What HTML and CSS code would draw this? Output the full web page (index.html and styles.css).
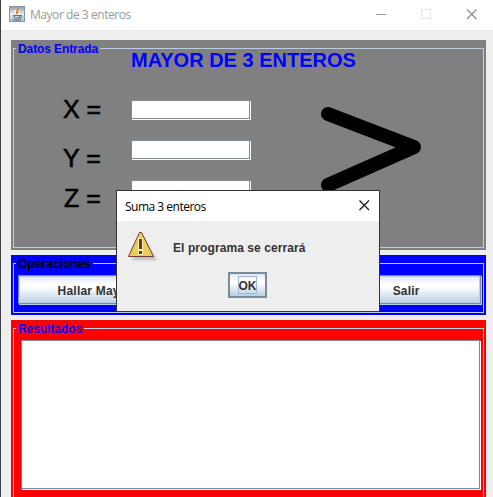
FILE: index.html
```html
<!DOCTYPE html>
<html lang="es">
<head>
<meta charset="utf-8">
<title>Mayor de 3 enteros</title>
<link rel="stylesheet" href="styles.css">
</head>
<body>
<div class="window">
  <header class="titlebar">
    <svg class="java" width="16" height="16" viewBox="0 0 16 16">
      <defs><linearGradient id="jg" x2="0" y2="1"><stop offset="0" stop-color="#8f9ba5"/><stop offset=".5" stop-color="#e8edf0"/><stop offset="1" stop-color="#a9b9c5"/></linearGradient></defs>
      <rect x=".5" y=".5" width="15" height="15" fill="url(#jg)" stroke="#8194a3"/>
      <path d="M5 4H11V9H5Z" fill="#f6f3ee"/>
      <path d="M9 2C10 4 6 5 7.500 8M10 4.500C8 5.500 8 6.500 9 8" fill="none" stroke="#ed7d28" stroke-width="1.300"/>
      <path d="M4.500 9.500H11L10 12H6ZM11 9.500Q13.500 9 13 10.500T10.500 12M4 13.500Q8 14.800 12 13.500" fill="none" stroke="#4c6f8f"/>
    </svg>
    <h1 class="caption"><span>Mayor de 3 enteros</span></h1>
    <svg class="controls" width="104" height="12" viewBox="0 0 104 12" fill="none">
      <path d="M0 5.500H10" stroke="#999"/>
      <rect x="45.500" y=".5" width="9" height="9" stroke="#e5e5e5"/>
      <path d="M91 .5L100.500 10M100.500 .5L91 10" stroke="#888" stroke-width="1.100"/>
    </svg>
  </header>
  <main class="content">
    <section class="panel entry">
      <div class="frame">
        <h2 class="legend">Datos Entrada</h2>
        <p class="heading">MAYOR DE 3 ENTEROS</p>
        <div class="inputs">
          <div class="rows">
            <div class="row"><label class="x">X =</label><span class="sunken field"></span></div>
            <div class="row"><label class="y">Y =</label><span class="sunken field"></span></div>
            <div class="row"><label class="z">Z =</label><span class="sunken field"></span></div>
          </div>
          <svg class="greater" width="102" height="88" viewBox="0 0 102 88"><path d="M8 8L94 41L8 79" fill="none" stroke="#000" stroke-width="14" stroke-linecap="round" stroke-linejoin="round"/></svg>
        </div>
      </div>
    </section>
    <section class="panel operations">
      <div class="frame">
        <h2 class="legend">Operaciones</h2>
        <div class="buttons">
          <button class="btn">Hallar Mayor</button>
          <button class="btn last">Salir</button>
        </div>
      </div>
    </section>
    <section class="panel results">
      <div class="frame">
        <h2 class="legend">Resultados</h2>
        <div class="sunken output"></div>
      </div>
    </section>
  </main>
</div>
<div class="dialog">
  <header class="dialog-bar">
    <span class="dialog-title">Suma 3 enteros</span>
    <svg class="dialog-close" width="11" height="11" viewBox="0 0 11 11"><path d="M.5 .5L10 10M10 .5L.5 10" stroke="#111" stroke-width="1.100"/></svg>
  </header>
  <div class="message">
    <svg class="warning" width="32" height="32" viewBox="0 0 32 32">
      <path d="M16 6L30 29H5Z" class="shadow"/>
      <path d="M12.500 1.500H14.500L26.500 25.500H1.500Z" fill="#e8ce5c" stroke="#783b3b"/>
      <path d="M11 7H16V24H11Z" fill="#fff3a8"/>
      <path d="M12 8H15V18H12ZM12 20H15V23H12Z" fill="#703434"/>
    </svg>
    <span class="message-text">El programa se cerrará</span>
  </div>
  <button class="ok"><span class="focus">OK</span></button>
</div>
</body>
</html>
```
FILE: styles.css
```css
* { box-sizing: border-box; }
body {
  margin: 0;
  width: 493px;
  height: 497px;
  overflow: hidden;
  position: relative;
  font-family: "Liberation Sans", Arial, sans-serif;
  font-size: 12px;
  color: #333;
}
h1, h2, p { margin: 0; }
button { font: inherit; color: inherit; padding: 0; }
.window {
  height: 497px;
  border-left: 1px solid #3c4043;
  background: #eee;
  overflow: hidden;
}
.titlebar {
  height: 30px;
  display: flex;
  align-items: flex-start;
  background: #fff;
  padding: 6px 0 0 8px;
}
.caption {
  margin-left: 5px;
  width: 346px;
  font: 12px/18px "Open Sans", sans-serif;
  letter-spacing: -0.45px;
  color: #999;
}
.controls { margin-top: 3px; flex: none; }
.content {
  padding: 10px 7px 0 10px;
  display: flex;
  flex-direction: column;
  gap: 5px;
}
.panel { padding: 8px 2px 2px; }
.entry { height: 210px; background: #808080; color: #000; }
.operations { height: 60px; background: #00f; }
.results { height: 200px; background: #f00; }
.frame {
  position: relative;
  height: 100%;
  border: 1px solid #b8cfe5;
}
.legend {
  position: absolute;
  left: 2px;
  top: -7px;
  padding: 0 2px;
  font-size: 12px;
  line-height: 15px;
  font-weight: bold;
  color: #00f;
}
.entry .legend { background: #808080; letter-spacing: -0.1px; }
.operations .legend { background: #00f; color: #000; }
.results .legend { background: #f00; letter-spacing: -0.05px; }
.heading {
  padding-left: 117px;
  font-size: 20px;
  line-height: 23px;
  font-weight: bold;
  color: #00f;
  white-space: nowrap;
}
.inputs { display: flex; padding-top: 28px; }
.rows {
  width: 306px;
  display: flex;
  flex-direction: column;
  gap: 20px;
}
.row { display: flex; height: 20px; }
.row label {
  width: 117px;
  padding-left: 49px;
  font-size: 25px;
  line-height: 19px;
  -webkit-text-stroke: 0.6px #000;
}
.row .y, .row .z { padding-top: 9px; }
.row .z { padding-left: 50px; }
.sunken {
  background: #fff;
  border: 1px solid #7a8a99;
  box-shadow: 1px 1px 0 #fff;
}
.field { width: 119px; height: 19px; }
.greater { margin-top: 6px; }
.buttons {
  display: grid;
  grid-template-columns: repeat(3, 1fr);
  padding: 11px 1px 0 4px;
}
.btn {
  height: 29px;
  margin-right: 1px;
  padding-top: 2px;
  border: 1px solid #7a8a99;
  box-shadow: 1px 1px 0 #b8cfe5, inset 1px 1px 0 #b8cfe5, inset -1px -1px 0 #b8cfe5;
  background: linear-gradient(#dde8f3, #fff 30%, #fff 40%, #b8cfe5);
  font-weight: bold;
  letter-spacing: 0.2px;
}
.last { grid-column: 3; padding-left: 4px; }
.output { height: 149px; margin: 11px 3px 0 7px; }
.dialog {
  position: absolute;
  left: 116px;
  top: 190px;
  width: 264px;
  height: 122px;
  border: 1px solid #333;
  background: #eee;
}
.dialog-bar {
  height: 30px;
  display: flex;
  justify-content: space-between;
  align-items: center;
  padding: 0 9px 0 8px;
  background: #fff;
}
.dialog-close { margin-top: -2px; }
.dialog-title {
  font: 12px/17px "Open Sans", sans-serif;
  letter-spacing: -0.5px;
  color: #000;
}
.message { display: flex; padding: 10px 0 0 10px; }
.message-text {
  margin-left: 14px;
  font-weight: bold;
  letter-spacing: 0.08px;
  line-height: 14px;
  padding-top: 10px;
}
.shadow { fill: #999; opacity: .55; filter: blur(1.2px); }
.ok {
  display: flex;
  align-items: center;
  justify-content: center;
  width: 39px;
  height: 26px;
  margin: 9px 0 0 111px;
  border: 2px solid #7a8a99;
  background: linear-gradient(#dde8f3, #fff 30%, #fff 40%, #b8cfe5);
  font-weight: bold;
}
.focus {
  width: 19px;
  height: 18px;
  line-height: 18px;
  border: 1px solid #a3b8cc;
  display: flex;
  justify-content: center;
}
```
